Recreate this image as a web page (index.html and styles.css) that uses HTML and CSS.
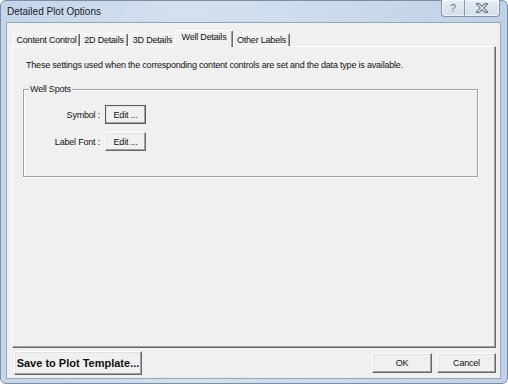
FILE: index.html
```html
<!DOCTYPE html>
<html lang="en">
<head>
    <meta charset="UTF-8" />
    <title>Detailed Plot Options</title>
    <link rel="stylesheet" href="styles.css">
</head>
<body>
    <div class="window">
        <div class="titlebar">
            <span class="title">Detailed Plot Options</span>
            <div class="caption-buttons">
                <span class="cap-btn help">?</span>
                <span class="cap-btn close">
                    <svg width="12" height="10" viewBox="0 0 12 10">
                        <path d="M2 1 L10 9 M10 1 L2 9" stroke="#5e6670" stroke-width="3.2" stroke-linecap="square" fill="none"/>
                        <path d="M2 1 L10 9 M10 1 L2 9" stroke="#eef2f7" stroke-width="1.3" fill="none"/>
                    </svg>
                </span>
            </div>
        </div>

        <div class="client">
            <div class="tabs">
                <div class="tab tab-content">Content Control</div>
                <div class="tab tab-2d">2D Details</div>
                <div class="tab tab-3d">3D Details</div>
                <div class="tab tab-well active">Well Details</div>
                <div class="tab tab-labels">Other Labels</div>
            </div>

            <div class="panel">
                <p class="note">These settings used when the corresponding content controls are set and the data type is available.</p>

                <fieldset class="group">
                    <legend>Well Spots</legend>
                    <div class="row">
                        <label>Symbol :</label>
                        <button class="btn small default">Edit ...</button>
                    </div>
                    <div class="row">
                        <label>Label Font :</label>
                        <button class="btn small">Edit ...</button>
                    </div>
                </fieldset>
            </div>

            <div class="footer">
                <button class="btn save">Save to Plot Template...</button>
                <div class="spacer"></div>
                <button class="btn ok">OK</button>
                <button class="btn cancel">Cancel</button>
            </div>
        </div>
    </div>
</body>
</html>
```
FILE: styles.css
```css
body {
    margin: 0;
    font-family: "Liberation Sans", Arial, sans-serif;
    background: #ffffff;
}
.window {
    box-sizing: border-box;
    width: 508px;
    height: 384px;
    border: 1px solid #7d8ea3;
    border-radius: 6px;
    background: linear-gradient(to right, #c3d5ea 0%, #d3e0ef 35%, #cfdeee 55%, #bfd1e7 100%);
    display: flex;
    flex-direction: column;
}
.titlebar {
    height: 22px;
    display: flex;
    align-items: flex-start;
}
.title {
    flex: 1;
    font-size: 10px;
    color: #1b1b1b;
    padding: 5px 0 0 6px;
}
.caption-buttons {
    display: flex;
    margin: -1px 7px 0 0;
    height: 16px;
    border: 1px solid #8193a9;
    border-top: none;
    border-radius: 0 0 4px 4px;
    background: linear-gradient(#e6edf5, #d2deeb);
    box-shadow: inset 0 0 0 1px rgba(255,255,255,0.6);
}
.cap-btn {
    display: flex;
    align-items: center;
    justify-content: center;
    height: 16px;
}
.help {
    width: 22px;
    border-right: 1px solid #8c9db2;
    font-size: 11px;
    color: #747b84;
}
.close {
    width: 34px;
}
.client {
    flex: 1;
    margin: 0 7px 5px 6px;
    background: #f0f0f0;
    box-shadow: 0 0 0 1px #96a6ba;
    display: flex;
    flex-direction: column;
    padding-top: 7px;
    font-size: 9px;
    letter-spacing: -0.2px;
    color: #111;
}
.tabs {
    display: flex;
    align-items: flex-end;
    margin-left: 6px;
    height: 16px;
    position: relative;
    z-index: 1;
}
.tab {
    box-sizing: border-box;
    height: 13px;
    line-height: 12px;
    text-align: center;
    border-top: 1px solid #ffffff;
    border-left: 1px solid #ffffff;
    border-right: 1px solid #696969;
    border-radius: 2px 2px 0 0;
    box-shadow: inset -1px 0 0 #a0a0a0;
    white-space: nowrap;
}
.tab-content { width: 67px; }
.tab-2d { width: 48px; }
.tab-3d { width: 49px; }
.tab-well { width: 58px; }
.tab-labels { width: 57px; }
.tab.active {
    height: 17px;
    line-height: 13px;
    margin: 0 -1px -1px -2px;
    background: #f0f0f0;
}
.tab.active + .tab {
    margin-left: 1px;
}
.panel {
    flex: 1;
    margin: 0 4px 0 5px;
    border-top: 1px solid #ffffff;
    border-left: 1px solid #ffffff;
    border-right: 1px solid #696969;
    border-bottom: 1px solid #696969;
    box-shadow: inset -1px -1px 0 #a0a0a0;
    padding: 0 17px 0 10px;
}
.note {
    margin: 13px 0 13px 3px;
    line-height: 11px;
    white-space: nowrap;
}
.group {
    margin: 0;
    padding: 10px 0 25px 0;
    border: 1px solid #a0a0a0;
    box-shadow: 1px 1px 0 #ffffff, inset 1px 1px 0 #ffffff;
}
.group legend {
    margin-left: 5px;
    padding: 0 1px;
    line-height: 11px;
}
.row {
    display: flex;
    align-items: center;
    height: 19px;
    margin-bottom: 8px;
}
.row:last-child {
    margin-bottom: 0;
}
.row label {
    width: 76px;
    text-align: right;
    padding-right: 5px;
}
.btn {
    font-family: "Liberation Sans", Arial, sans-serif;
    font-size: 9px;
    letter-spacing: -0.2px;
    color: #111;
    background: #f0f0f0;
    border-top: 1px solid #ffffff;
    border-left: 1px solid #ffffff;
    border-right: 1px solid #696969;
    border-bottom: 1px solid #696969;
    box-shadow: inset -1px -1px 0 #a0a0a0, inset 1px 1px 0 #e3e3e3;
    padding: 0;
    box-sizing: border-box;
    border-radius: 0;
}
.btn.small {
    width: 41px;
    height: 19px;
}
.btn.default {
    outline: 1px solid #5a5a5a;
    outline-offset: -1px;
}
.footer {
    display: flex;
    align-items: center;
    height: 30px;
    padding: 0 4px 0 7px;
    gap: 5px;
}
.spacer {
    flex: 1;
}
.btn.save {
    height: 24px;
    width: 128px;
    font-size: 11px;
    font-weight: bold;
    letter-spacing: 0;
}
.btn.ok {
    width: 60px;
    height: 20px;
}
.btn.cancel {
    width: 59px;
    height: 20px;
}
```
